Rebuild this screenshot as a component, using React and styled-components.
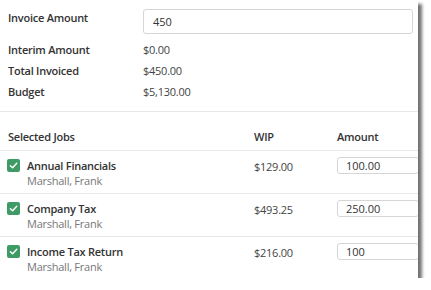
import React from "react";
import styled, { createGlobalStyle } from "styled-components";

const Global = createGlobalStyle`
  html, body { margin: 0; padding: 0; background: #fff; }
  body { font-family: "Open Sans", "Noto Sans", "Liberation Sans", sans-serif; color: #333; }
  * { box-sizing: border-box; }
`;

const Panel = styled.div`
  width: 418px;
  height: 278px;
  background: #fff;
  box-shadow: 4px 4px 3px rgba(0, 0, 0, 0.55);
  overflow: hidden;
  font-size: 11px;
  letter-spacing: -0.25px;
`;

const Summary = styled.div`
  display: grid;
  grid-template-columns: 135px 1fr;
  grid-template-rows: 30px 21px 21px 21px;
  align-items: center;
  padding: 9px 5px 0 8px;
  height: 112px;
  border-bottom: 1px solid #e8e8e8;
`;

const Label = styled.div`
  font-weight: 600;
  color: #333;
  align-self: ${(p) => (p.$top ? "start" : "center")};
  padding-top: ${(p) => (p.$top ? "1px" : "0")};
`;

const Value = styled.div`
  color: #444;
`;

const TextInput = styled.input`
  font: inherit;
  font-size: 11px;
  color: #333;
  height: 25px;
  width: 270px;
  align-self: start;
  border: 1px solid #d6d6d6;
  border-radius: 3px;
  padding: 0 9px;
  outline: none;
`;

const Table = styled.div`
  display: flex;
  flex-direction: column;
`;

const Row = styled.div`
  display: grid;
  grid-template-columns: 246px 83px 81px;
  padding-left: 8px;
  border-bottom: 1px solid ${(p) => (p.$last ? "transparent" : "#e8e8e8")};
  height: ${(p) => (p.$head ? "39px" : "43px")};
  align-items: ${(p) => (p.$head ? "end" : "start")};
  padding-bottom: ${(p) => (p.$head ? "6px" : "0")};
`;

const Head = styled.div`
  font-weight: 600;
  color: #333;
`;

const JobCell = styled.div`
  display: flex;
  gap: 7px;
  padding-top: 7px;
  margin-left: -1px;
`;

const Check = styled.span`
  width: 13px;
  height: 13px;
  border-radius: 2px;
  background: #3f9b66;
  display: flex;
  align-items: center;
  justify-content: center;
  flex-shrink: 0;
  margin-top: 1px;
`;

const JobText = styled.div`
  display: flex;
  flex-direction: column;
  line-height: 15px;
`;

const JobName = styled.div`
  font-weight: 600;
  color: #333;
`;

const JobSub = styled.div`
  color: #777;
`;

const Wip = styled.div`
  color: #444;
  padding-top: 8px;
`;

const AmountInput = styled.input`
  font: inherit;
  font-size: 11px;
  color: #333;
  height: 17px;
  width: 82px;
  border: 1px solid #d6d6d6;
  border-radius: 3px;
  padding: 0 8px;
  margin-top: 6px;
  outline: none;
`;

const CheckIcon = () => (
  <svg width="9" height="9" viewBox="0 0 10 10">
    <path d="M1.5 5.2 L4 7.6 L8.6 2.6" fill="none" stroke="#fff" strokeWidth="1.6" strokeLinecap="round" strokeLinejoin="round" />
  </svg>
);

const jobs = [
  { name: "Annual Financials", client: "Marshall, Frank", wip: "$129.00", amount: "100.00" },
  { name: "Company Tax", client: "Marshall, Frank", wip: "$493.25", amount: "250.00" },
  { name: "Income Tax Return", client: "Marshall, Frank", wip: "$216.00", amount: "100" },
];

export default function App() {
  return (
    <>
      <Global />
      <Panel>
        <Summary>
          <Label $top>Invoice Amount</Label>
          <TextInput defaultValue="450" />
          <Label>Interim Amount</Label>
          <Value>$0.00</Value>
          <Label>Total Invoiced</Label>
          <Value>$450.00</Value>
          <Label>Budget</Label>
          <Value>$5,130.00</Value>
        </Summary>
        <Table>
          <Row $head>
            <Head>Selected Jobs</Head>
            <Head>WIP</Head>
            <Head>Amount</Head>
          </Row>
          {jobs.map((j, i) => (
            <Row key={j.name} $last={i === jobs.length - 1}>
              <JobCell>
                <Check>
                  <CheckIcon />
                </Check>
                <JobText>
                  <JobName>{j.name}</JobName>
                  <JobSub>{j.client}</JobSub>
                </JobText>
              </JobCell>
              <Wip>{j.wip}</Wip>
              <AmountInput defaultValue={j.amount} />
            </Row>
          ))}
        </Table>
      </Panel>
    </>
  );
}
